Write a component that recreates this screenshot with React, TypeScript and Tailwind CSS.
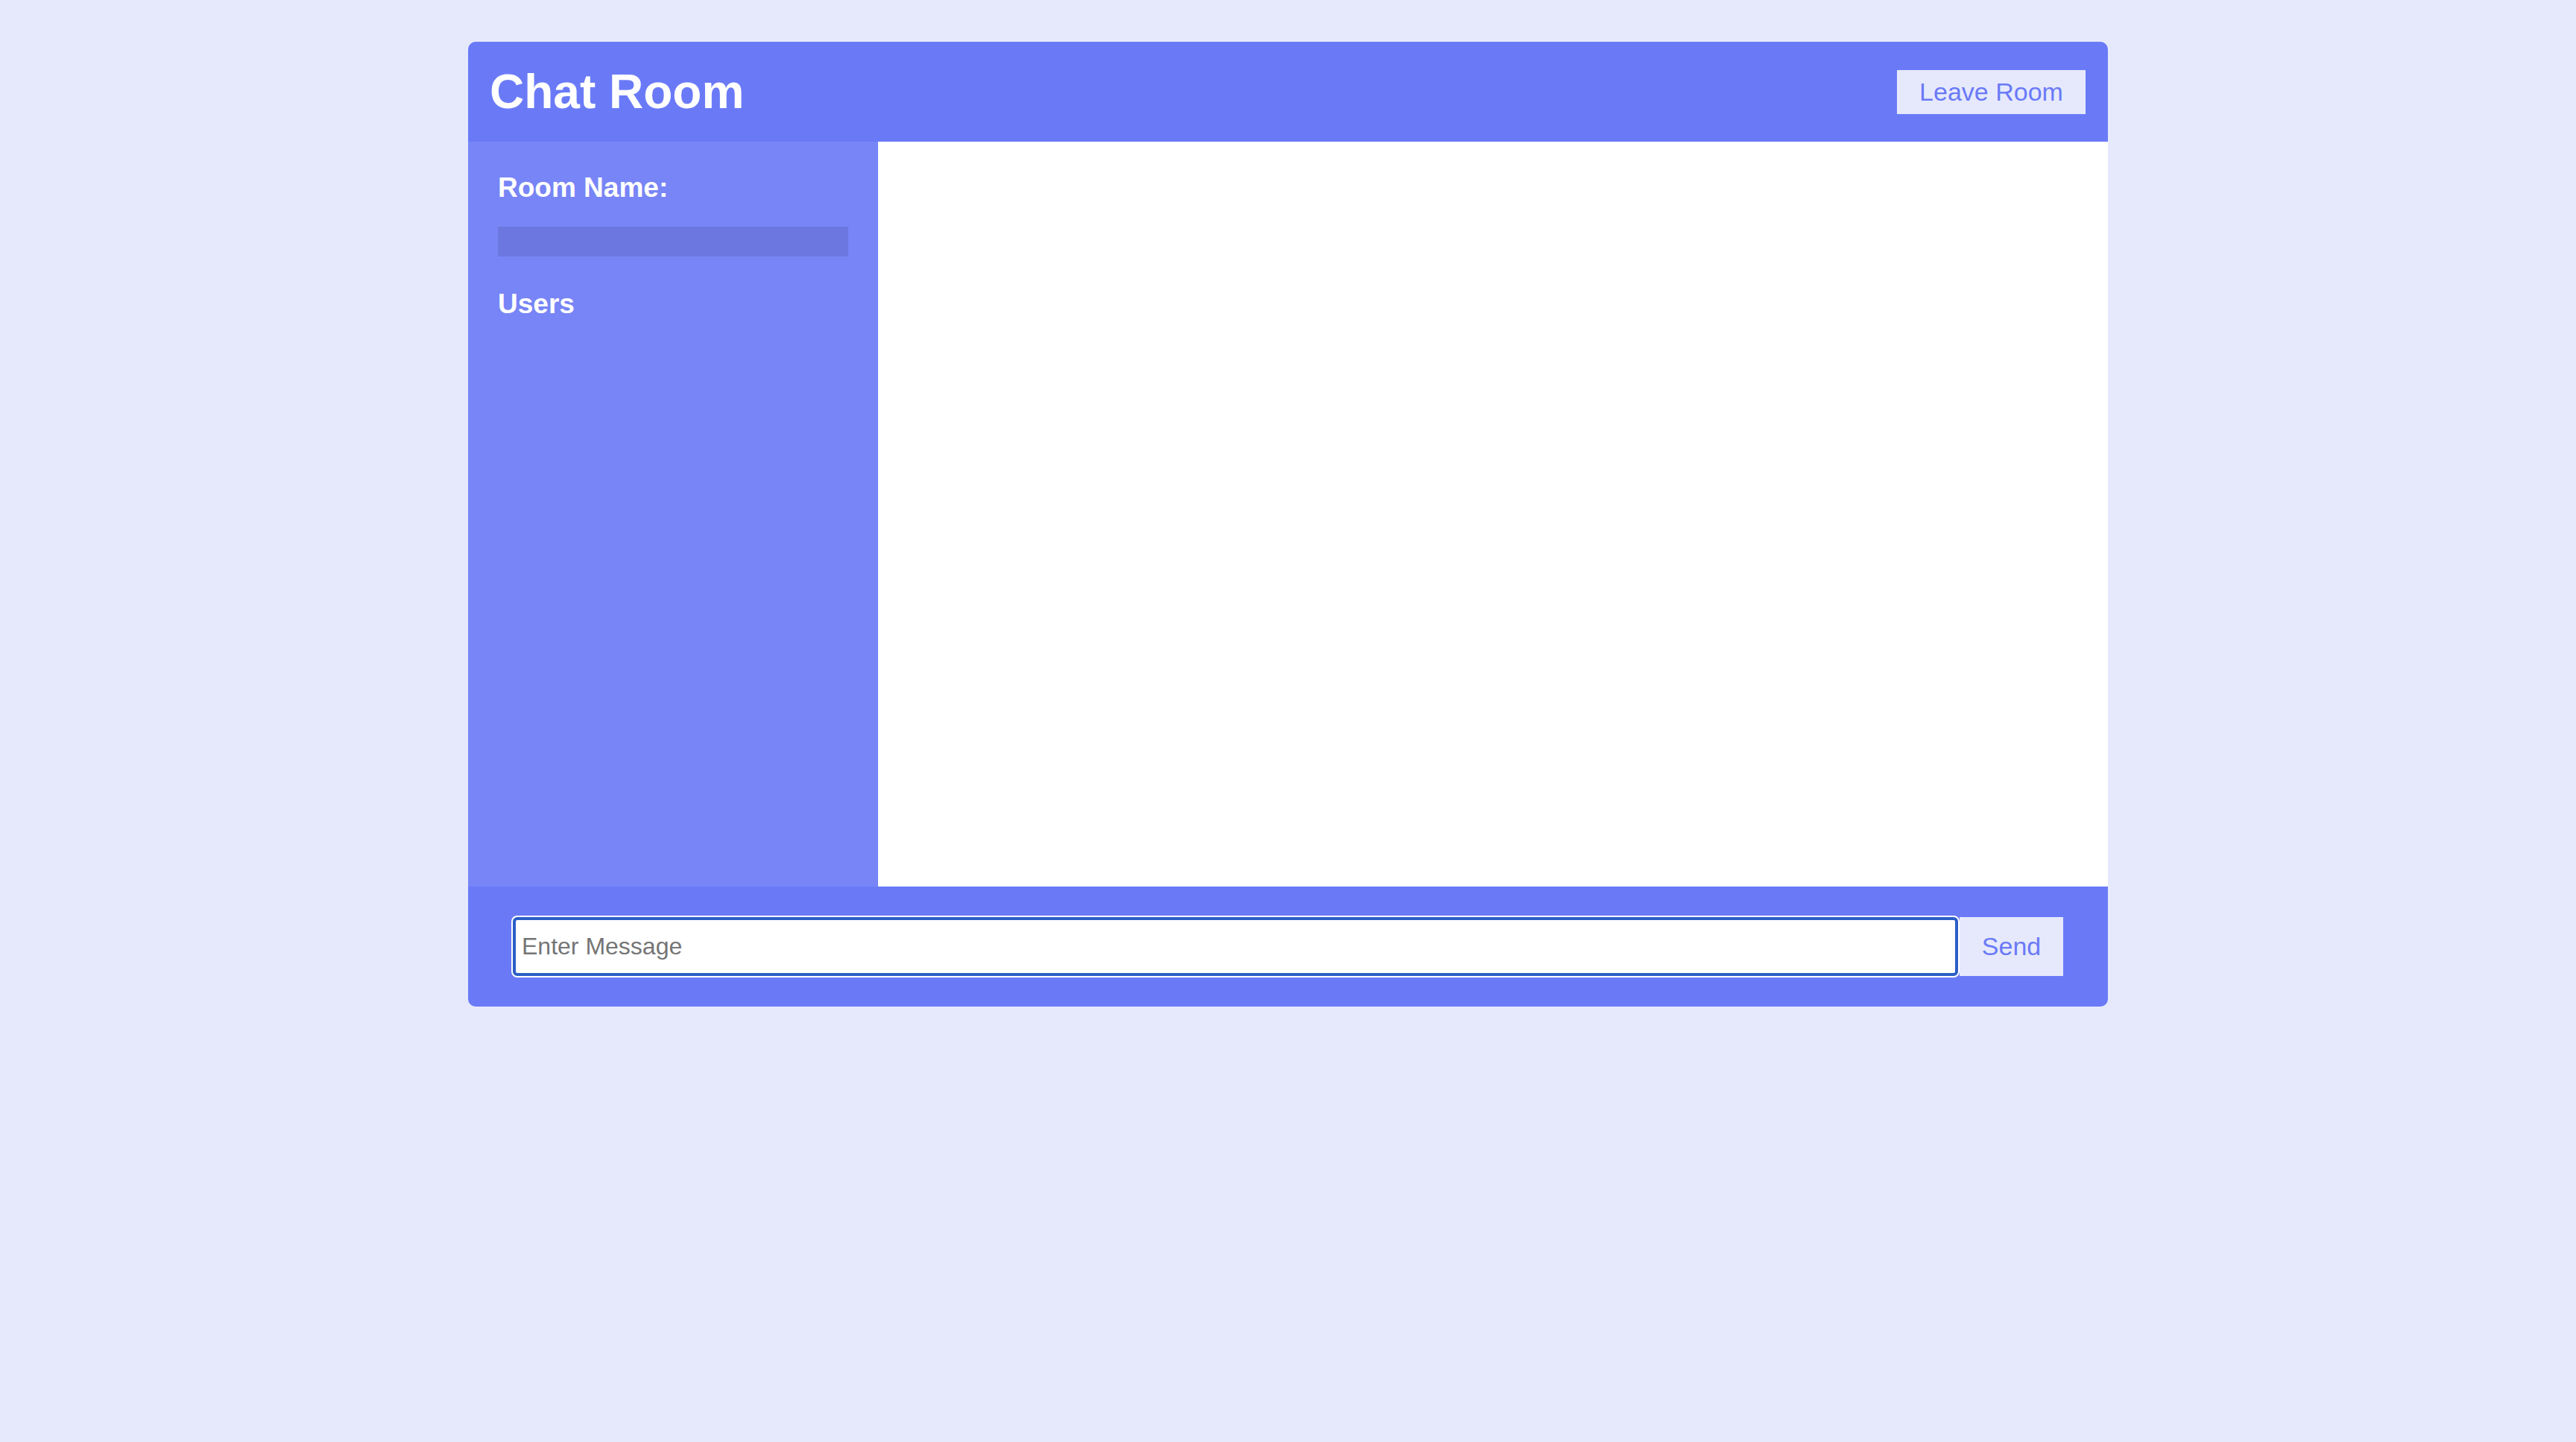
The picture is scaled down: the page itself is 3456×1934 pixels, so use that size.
export default function App() {
  return (
    <div
      className="min-h-screen w-full bg-[#e6e9fc] pt-[56px]"
      style={{ fontFamily: '"Liberation Sans", Arial, Helvetica, sans-serif' }}
    >
      <div className="mx-auto flex w-[2200px] flex-col overflow-hidden rounded-[10px]">
        {/* header */}
        <header className="flex h-[134px] items-center justify-between bg-[#6a7af7] pl-[29px] pr-[30px]">
          <h1 className="text-[64px] font-bold leading-[74px] text-white">Chat Room</h1>
          <button className="flex h-[59px] w-[253px] items-center justify-center bg-[#e6e9fc] text-[34px] leading-[39px] text-[#6a7af7]">
            Leave Room
          </button>
        </header>

        {/* body */}
        <div className="flex h-[999px]">
          <aside className="flex w-[550px] shrink-0 flex-col bg-[#7885f6] px-[40px] pt-[40px]">
            <h3 className="text-[37px] font-bold leading-[43px] text-white">Room Name:</h3>
            <div className="mt-[31px] h-[40px] w-full bg-[#6c78e0]" />
            <h3 className="mt-[42px] text-[37px] font-bold leading-[43px] text-white">Users</h3>
            <ul />
          </aside>
          <main className="flex-1 bg-white" />
        </div>

        {/* footer */}
        <footer className="flex h-[161px] items-center bg-[#6a7af7] px-[60px]">
          <form className="flex h-[79px] w-full items-stretch" onSubmit={(e) => e.preventDefault()}>
            <input
              autoFocus
              type="text"
              placeholder="Enter Message"
              className="h-full flex-1 rounded-[6px] border-[4px] border-[#2b5ec6] bg-white pl-[8px] text-[32px] text-[#222] outline-none ring-[2px] ring-white placeholder:text-[#757575]"
            />
            <button
              type="submit"
              className="ml-[2px] flex w-[139px] items-center justify-center bg-[#e6e9fc] text-[34px] leading-[39px] text-[#6a7af7]"
            >
              Send
            </button>
          </form>
        </footer>
      </div>
    </div>
  );
}
